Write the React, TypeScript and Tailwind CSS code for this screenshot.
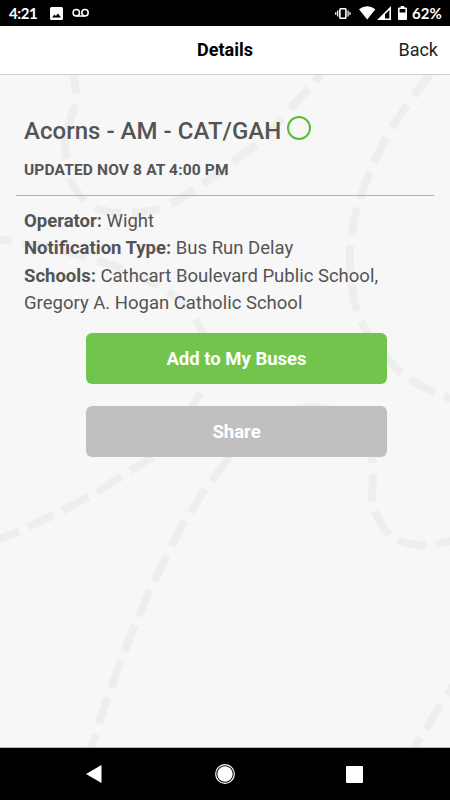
import React from "react";

const ROUTE_DASHES = [
  // upper loop
  "M74 73Q74.500 85 77 93", "M76 103.500Q71 115 67.500 129", "M65.500 134Q64.500 146 66 158", "M70 178Q75 191 85 200",
  "M95 207Q108 212 121.500 212.500", "M132 212.500Q147 212 160 207.500", "M171 203Q184 197 194 189", "M203 183L225 168",
  "M233 161L256.500 144", "M265 136.500L282 118", "M290 108L308.500 87.500", "M315 81L321 73",
  // right-hand curve
  "M430 73L413.500 95", "M407 104L392 127", "M386 136.500L374 161.500", "M370 171Q364 184 360.500 198", "M357 207Q353 220 352 235",
  "M350 245Q349 259 350.500 273", "M351.500 283Q353 298 357.500 311", "M361 321L369 336", "M384 353Q391 364 401.500 373",
  "M410 379Q421 387 435 392", "M444 396L454 400",
  // left-hand curve
  "M-2 239L12 241", "M22 242.500Q36 244 50 247", "M60 250L86 257", "M97 260Q111 264 124 269", "M133 273.500Q147 279 159 286",
  "M168 292Q180 299 189 308", "M196 319L204 336", "M200 393Q197 400 190 409", "M152 457L130 471", "M121.500 476.500L97 492",
  "M88.500 497L62.500 511", "M54 515L28 527.500", "M19 532L-3 540",
  // central trail
  "M95.500 735L91 750", "M107.500 698L99 725", "M120.500 661L111.500 689", "M134.500 625.500L124.500 652.500", "M150 590L139 617",
  "M166.500 555.500L154.500 581.500", "M185 521L171 547", "M205 489L190.500 513", "M230 456L212 481", "M297 409Q312 405 328 409",
  "M372.500 454L372.500 463", "M373.500 474Q371.500 488 372.500 502", "M375 511.500Q380 526 389.500 535", "M398 541Q410 546 426 545.500",
  "M436 545L454 540.500",
  // lower right
  "M447 696L454 685", "M440.500 705L426 730", "M420.500 738.500L414 750",
];

function RouteBackdrop() {
  return (
    <svg className="absolute inset-0 h-full w-full" viewBox="0 74 450 674" preserveAspectRatio="none" fill="none" stroke="#eeeeee" strokeWidth="8" aria-hidden="true">
      {ROUTE_DASHES.map((d) => <path key={d} d={d} />)}
    </svg>
  );
}

function StatusBar() {
  return (
    <div className="flex h-[26px] shrink-0 items-center bg-black pl-[9px] pr-[9px] font-['Lato',sans-serif] text-[15px] font-bold leading-none tracking-[-0.4px] text-white">
      <span className="w-[41px] whitespace-nowrap">4:21</span>
      <svg width="13" height="13" viewBox="0 0 13 13">
        <path fill="#fff" fillRule="evenodd" d="M1.500 0h10Q13 0 13 1.500v10Q13 13 11.500 13h-10Q0 13 0 11.500v-10Q0 0 1.500 0ZM2 10.500h9L8 6.500 5.900 9.100 4.500 7.500Z" />
      </svg>
      <svg className="ml-[9px]" width="18" height="10" viewBox="0 0 18 10" fill="none" stroke="#fff" strokeWidth="1.500">
        <circle cx="4.300" cy="4.800" r="3.200" /><circle cx="13" cy="4.800" r="3.200" /><path d="M4.300 8h8.700" />
      </svg>
      <div className="ml-auto flex items-center">
        <svg width="16" height="13" viewBox="0 0 16 13" fill="none" stroke="#fff">
          <rect x="4.900" y="1.700" width="6" height="9.600" rx=".7" strokeWidth="1.600" />
          <path strokeWidth="1.200" d="M2.700 3.500v6M.8 5v3M13.100 3.500v6M15 5v3" />
        </svg>
        <svg className="ml-[8px]" width="17" height="14" viewBox="0 0 17 14"><path fill="#fff" d="M0 3.200Q8.200-2.600 16.400 3.200L8.200 13.500Z" /></svg>
        <svg className="ml-px" width="15" height="14" viewBox="0 0 15 14"><path fill="#fff" fillRule="evenodd" d="M14 0v14H0ZM12.400 3.900 8 8.300v4.200h4.400Z" /></svg>
        <svg className="ml-[6px]" width="9" height="14" viewBox="0 0 9 14"><path fill="#fff" fillRule="evenodd" d="M2.700 0h3.600v1.400H8q1 0 1 1V13q0 1-1 1H1q-1 0-1-1V2.400q0-1 1-1h1.700ZM1.600 3.100v3.300h5.800V3.100Z" /></svg>
        <span className="ml-[5px] w-[29px] whitespace-nowrap tracking-normal">62%</span>
      </div>
    </div>
  );
}

function NavigationBar() {
  return (
    <div className="flex h-[53px] shrink-0 items-center border-t border-[#b5b5b5] bg-black pl-[86px]">
      <svg width="16" height="18" viewBox="0 0 16 18"><path fill="#fff" d="M15.500 0v18L0 9Z" /></svg>
      <svg className="ml-[113px]" width="20" height="20" viewBox="0 0 20 20">
        <circle cx="10" cy="10" r="9.300" fill="none" stroke="#fff" strokeWidth="1.200" /><circle cx="10" cy="10" r="7.700" fill="#fff" />
      </svg>
      <span className="ml-[111px] size-[17px] rounded-[1px] bg-white" />
    </div>
  );
}

export default function App() {
  return (
    <div className="flex h-[800px] w-[450px] flex-col overflow-hidden bg-[#f7f7f7] font-['Roboto',sans-serif] text-[#545454]">
      <StatusBar />
      <header className="grid h-[49px] shrink-0 grid-cols-3 items-center border-b border-[#d0d0d0] bg-white pb-[2px] text-[18px] text-black">
        <span />
        <h1 className="text-center font-bold">Details</h1>
        <button className="justify-self-end pr-[12px] text-[#222222]">Back</button>
      </header>
      <main className="relative min-h-0 flex-1">
        <RouteBackdrop />
        <div className="relative px-4 pt-[38px]">
          <div className="flex h-[36px] items-center pl-2">
            <h2 className="whitespace-nowrap text-[24px] font-medium tracking-[0.03px]">Acorns - AM - CAT/GAH</h2>
            <span className="mb-[7px] ml-[6px] size-[24px] rounded-full border-2 border-[#5dbb34]" />
          </div>
          <p className="mt-[11px] pl-2 text-[15.500px] leading-[20px] font-bold tracking-[0.15px]">UPDATED NOV 8 AT 4:00 PM</p>
          <div className="mt-[15px] border-t border-[#b2b2b2]" />
          <div className="whitespace-nowrap pl-2 pt-[11.500px] text-[18.500px] leading-[27.500px]">
            <p><b>Operator:</b> Wight</p>
            <p><b>Notification Type:</b> Bus Run Delay</p>
            <p><b>Schools:</b> Cathcart Boulevard Public School,<br />Gregory A. Hogan Catholic School</p>
          </div>
          <div className="ml-[70px] mt-[15.500px] flex w-[301px] flex-col gap-[22px] text-[18.500px] font-bold text-white">
            <button className="h-[51px] rounded-[6px] bg-[#72c54c] pt-[2px]">Add to My Buses</button>
            <button className="h-[51px] rounded-[6px] bg-[#c0c0c0] pt-[2px]">Share</button>
          </div>
        </div>
      </main>
      <NavigationBar />
    </div>
  );
}
